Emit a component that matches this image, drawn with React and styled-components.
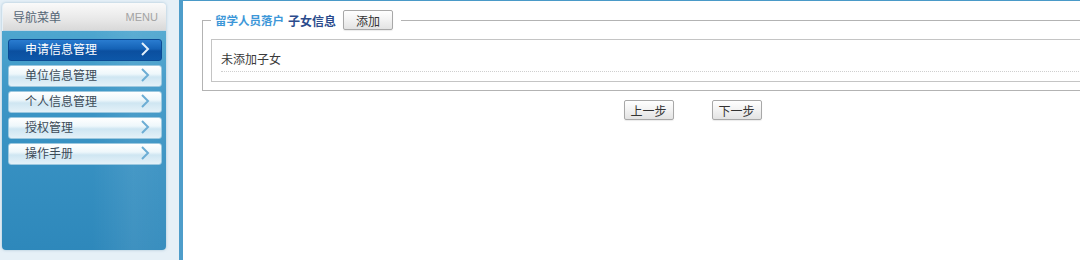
import React from 'react'
import styled, { createGlobalStyle } from 'styled-components'

const GlobalStyle = createGlobalStyle`
  html, body {
    margin: 0;
    padding: 0;
    background: #ffffff;
    overflow: hidden;
  }
  body {
    font-family: "Noto Sans CJK SC", "Noto Sans", sans-serif;
    font-size: 12px;
    color: #333;
  }
`

const Page = styled.div`
  display: flex;
  width: 1202px;
  height: 260px;
`

const Sidebar = styled.aside`
  width: 183px;
  flex: none;
  background: #e6f0f7;
  border-right: 4px solid #4e9dca;
  padding: 3px 0 0 2px;
  box-sizing: border-box;
`

const Panel = styled.div`
  width: 164px;
  height: 247px;
  display: flex;
  flex-direction: column;
  border-radius: 4px;
  box-shadow: 0 0 3px rgba(120, 160, 190, 0.6);
`

const PanelHeader = styled.div`
  height: 27px;
  flex: none;
  display: flex;
  align-items: center;
  justify-content: space-between;
  padding: 0 8px 0 10px;
  margin-left: 1px;
  border-radius: 4px 4px 0 0;
  background: linear-gradient(#fafafa, #e8e8e8 60%, #d9d9d9);
  border-bottom: 1px solid #c6d6e2;
`

const HeaderTitle = styled.span`
  color: #566676;
  font-size: 12px;
`

const HeaderTag = styled.span`
  color: #a3a3a3;
  font-family: "Liberation Sans", Arial, sans-serif;
  font-size: 11px;
`

const PanelBody = styled.div`
  flex: 1;
  padding: 8px 0 0 6px;
  border-radius: 0 0 4px 4px;
  background:
    linear-gradient(90deg, rgba(255, 255, 255, 0) 55%, rgba(255, 255, 255, 0.08) 80%, rgba(255, 255, 255, 0.05)),
    linear-gradient(#4ea6cf, #3d96c6 30%, #2e88bb);
  display: flex;
  flex-direction: column;
  gap: 4px;
`

const MenuItem = styled.div`
  width: 154px;
  height: 22px;
  box-sizing: border-box;
  display: flex;
  align-items: center;
  justify-content: space-between;
  padding: 0 11px 2px 16px;
  border-radius: 3px;
  font-size: 12px;
  line-height: 1;
  color: ${(p) => (p.$active ? '#ffffff' : '#3c4b58')};
  border: 1px solid ${(p) => (p.$active ? '#0b4a94' : '#9cc8df')};
  background: ${(p) =>
    p.$active
      ? 'linear-gradient(#2a7cd0, #1462b6 45%, #0b4f9f 55%, #0d57a8)'
      : 'linear-gradient(#ffffff, #eef7fb 40%, #cfe6f2 55%, #e4f1f8)'};
`

const Chevron = ({ color }) => (
  <svg width="10" height="16" viewBox="0 0 10 16">
    <polyline points="2,2 8,8 2,14" fill="none" stroke={color} strokeWidth="2" />
  </svg>
)

const Main = styled.main`
  flex: 1;
  border-top: 1px solid #4a9ac8;
  padding: 9px 19px 0 19px;
`

const Fieldset = styled.fieldset`
  margin: 0;
  padding: 0 8px 8px 8px;
  border: 1px solid #b3b3b3;
`

const Legend = styled.legend`
  padding: 0 8px 0 4px;
  display: flex;
  align-items: center;
  font-size: 12px;
`

const LegendMuted = styled.span`
  color: #3d97d8;
  font-weight: bold;
  font-size: 11.5px;
`

const LegendStrong = styled.span`
  color: #2b4b8c;
  font-weight: bold;
  margin-left: 4px;
`

const Button = styled.button`
  width: ${(p) => p.$w || 50}px;
  height: 20px;
  padding: 0;
  margin-left: ${(p) => p.$ml || 0}px;
  font-family: inherit;
  font-size: 12px;
  color: #333;
  border: 1px solid #a8a8a8;
  border-radius: 2px;
  background: linear-gradient(#ffffff, #f2f2f2 50%, #e3e3e3);
  box-shadow: 0 1px 1px rgba(0, 0, 0, 0.08);
`

const InnerBox = styled.div`
  margin-top: 9px;
  border: 1px solid #c4c4c4;
  padding: 0 0 9px 9px;
`

const EmptyRow = styled.div`
  height: 32px;
  box-sizing: border-box;
  padding-top: 5px;
  display: flex;
  align-items: center;
  border-bottom: 1px dotted #cfcfcf;
  color: #3a3a3a;
  font-size: 12px;
`

const StepRow = styled.div`
  display: flex;
  justify-content: center;
  gap: 38px;
  margin-top: 9px;
`

const menu = ['申请信息管理', '单位信息管理', '个人信息管理', '授权管理', '操作手册']

export default function App() {
  return (
    <>
      <GlobalStyle />
      <Page>
        <Sidebar>
          <Panel>
            <PanelHeader>
              <HeaderTitle>导航菜单</HeaderTitle>
              <HeaderTag>MENU</HeaderTag>
            </PanelHeader>
            <PanelBody>
              {menu.map((m, i) => (
                <MenuItem key={m} $active={i === 0}>
                  <span>{m}</span>
                  <Chevron color={i === 0 ? '#e3f0fb' : '#6cadd4'} />
                </MenuItem>
              ))}
            </PanelBody>
          </Panel>
        </Sidebar>
        <Main>
          <Fieldset>
            <Legend>
              <LegendMuted>留学人员落户</LegendMuted>
              <LegendStrong>子女信息</LegendStrong>
              <Button $ml={7}>添加</Button>
            </Legend>
            <InnerBox>
              <EmptyRow>未添加子女</EmptyRow>
            </InnerBox>
          </Fieldset>
          <StepRow>
            <Button>上一步</Button>
            <Button>下一步</Button>
          </StepRow>
        </Main>
      </Page>
    </>
  )
}
